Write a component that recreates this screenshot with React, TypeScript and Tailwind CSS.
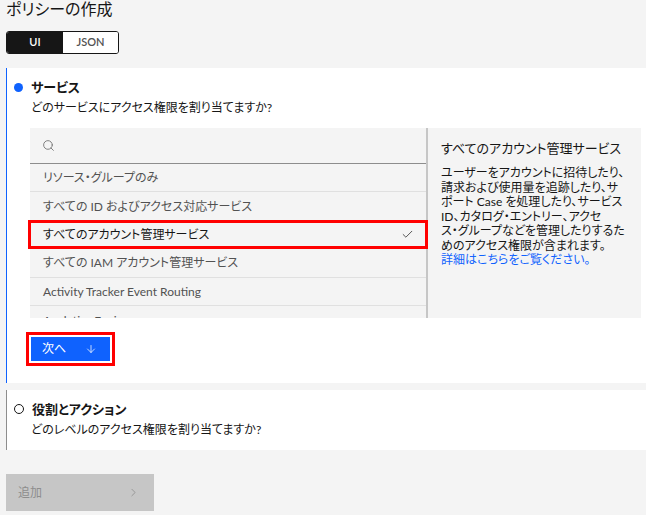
import { ArrowDown, Check, ChevronRight, Search } from "lucide-react";

const ITEMS = [
  "リソース・グループのみ",
  "すべての ID およびアクセス対応サービス",
  "すべてのアカウント管理サービス",
  "すべての IAM アカウント管理サービス",
  "Activity Tracker Event Routing",
  "Analytics Engine",
];

const SELECTED = 2;

export default function App() {
  return (
    <div className="relative min-h-screen w-full overflow-hidden bg-[#f4f4f4] text-[#161616] [font-family:Lato,'Noto_Sans_CJK_JP',sans-serif] [font-feature-settings:'palt']">
      {/* Title */}
      <h1 className="-mt-[2px] pl-[6px] text-[16px] leading-[22px] text-[#161616]">ポリシーの作成</h1>

      {/* UI / JSON switch */}
      <div className="ml-[6px] mt-[11px] flex h-[23px] w-[113px] overflow-hidden rounded-[3px] border border-[#161616] text-[11px] font-semibold">
        <div className="flex w-[56px] items-center justify-center bg-[#161616] text-white">UI</div>
        <div className="flex flex-1 items-center justify-center bg-white text-[#525252]">JSON</div>
      </div>

      {/* Step 1 */}
      <section className="ml-[6px] mt-[14px] h-[315px] border-l border-[#0f62fe] bg-white">
        <div className="flex items-center gap-[8px] pl-[7px] pt-[11px]">
          <span className="h-[9px] w-[9px] rounded-full bg-[#0f62fe]" />
          <span className="text-[13px] font-bold leading-[16px]">サービス</span>
        </div>
        <p className="mt-[5px] pl-[24px] text-[12px] leading-[16px] text-[#161616]">どのサービスにアクセス権限を割り当てますか?</p>

        <div className="ml-[23px] mt-[12px] flex h-[190px] w-[611px]">
          {/* list */}
          <div className="flex w-[396px] flex-col overflow-hidden bg-[#f4f4f4]">
            <div className="flex h-[36px] shrink-0 items-center border-b border-[#8d8d8d] pl-[12px]">
              <Search size={13} strokeWidth={1.6} className="text-[#6f6f6f]" />
            </div>
            {ITEMS.map((item, i) => (
              <div
                key={item}
                className={[
                  "flex h-[28.4px] shrink-0 items-center justify-between pl-[13px] pr-[12px] pt-[1px] text-[12px]",
                  i === SELECTED ? "text-[#161616]" : "text-[#525252]",
                  i < ITEMS.length - 1 ? "border-b border-[#e0e0e0]" : "",
                ].join(" ")}
              >
                <span>{item}</span>
                {i === SELECTED && <Check size={13} strokeWidth={1.8} className="text-[#525252]" />}
              </div>
            ))}
          </div>
          <div className="w-[2px] bg-[#c6c6c6]" />
          {/* description */}
          <div className="flex-1 bg-[#f4f4f4] px-[13px] pt-[12px]">
            <p className="text-[13px] leading-[17px] text-[#161616]">すべてのアカウント管理サービス</p>
            <p className="mt-[9px] text-[12px] leading-[14.5px] text-[#161616]">
              ユーザーをアカウントに招待したり、
              <br />
              請求および使用量を追跡したり、サ
              <br />
              ポート Case を処理したり、サービス
              <br />
              ID、カタログ・エントリー、アクセ
              <br />
              ス・グループなどを管理したりするた
              <br />
              めのアクセス権限が含まれます。
              <br />
              <span className="text-[#0f62fe]">詳細はこちらをご覧ください。</span>
            </p>
          </div>
        </div>

        <div className="relative ml-[24px] mt-[19px] inline-flex">
          <button className="flex h-[24px] w-[79px] items-center justify-between bg-[#0f62fe] pl-[11px] pr-[13px] text-[12px] text-white">
            <span>次へ</span>
            <ArrowDown size={12} strokeWidth={1.5} />
          </button>
          <div className="pointer-events-none absolute -inset-[5px] border-[3px] border-[#ff0000]" />
        </div>
      </section>

      {/* Step 2 */}
      <section className="ml-[6px] mt-[7px] h-[60px] border-l border-[#8d8d8d] bg-white">
        <div className="flex items-center gap-[8px] pl-[7px] pt-[11px]">
          <span className="h-[10px] w-[10px] rounded-full border border-[#161616]" />
          <span className="text-[13px] font-bold leading-[16px]">役割とアクション</span>
        </div>
        <p className="mt-[5px] pl-[24px] text-[12px] leading-[16px]">どのレベルのアクセス権限を割り当てますか?</p>
      </section>

      {/* Add */}
      <button className="ml-[6px] mt-[24px] flex h-[37px] w-[148px] items-center justify-between bg-[#c6c6c6] pl-[12px] pr-[14px] text-[12px] text-[#8d8d8d]">
        <span>追加</span>
        <ChevronRight size={13} strokeWidth={1.5} />
      </button>

      {/* red annotation box on the selected row */}
      <div className="pointer-events-none absolute left-[28px] top-[220px] h-[29px] w-[400px] border-[3px] border-[#ff0000]" />
    </div>
  );
}
